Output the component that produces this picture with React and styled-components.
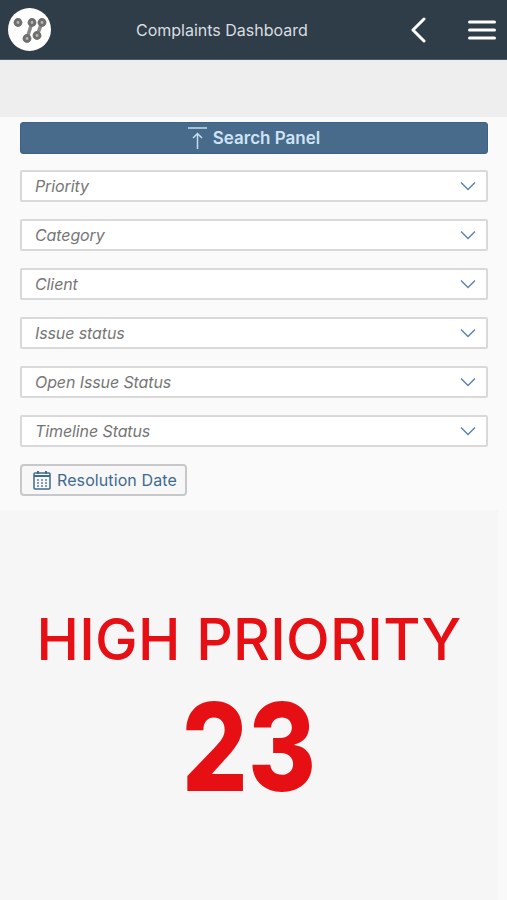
import React from "react";
import styled, { createGlobalStyle } from "styled-components";

const Global = createGlobalStyle`
  html, body { margin: 0; padding: 0; background: #f6f6f7; }
  * { box-sizing: border-box; }
`;
const Page = styled.div`
  width: 507px; height: 900px; overflow: hidden;
  display: flex; flex-direction: column;
  font-family: Inter, "Noto Sans", sans-serif;
  background: #f6f6f7;
`;
const Header = styled.header`
  height: 60px; flex: none;
  background: #2f3d49;
  border-bottom: 1px solid #4d5862;
  display: flex; align-items: center;
  padding: 0 11px 0 8px;
`;
const LogoWrap = styled.div`
  width: 43px; height: 43px; flex: none;
`;
const Title = styled.div`
  margin-left: 85px;
  color: #d9dde0; font-size: 16px; white-space: nowrap;
`;
const Actions = styled.div`
  margin-left: auto; display: flex; align-items: center; gap: 42px;
`;
const Band = styled.div`
  height: 57px; flex: none; background: #eeeeef;
`;
const Panel = styled.section`
  height: 393px; flex: none; background: #fafafa;
  padding: 5px 19px 0 20px;
  display: flex; flex-direction: column;
`;
const SearchButton = styled.button`
  height: 32px; width: 100%; flex: none; padding: 0;
  border: 1px solid #3f6284; border-radius: 3px;
  background: #486b8c;
  color: #cfe3f5; font: 600 17px Inter, sans-serif;
  display: flex; align-items: center; justify-content: center; gap: 5px;
  margin-bottom: 16px;
`;
const Select = styled.div`
  height: 32px; flex: none; background: #fff;
  border: 2px solid #d9d9d9; border-radius: 2px;
  padding: 0 10px 0 13px; margin-bottom: 17px;
  display: flex; align-items: center; justify-content: space-between;
  color: #767676; font-size: 16px; font-style: italic; letter-spacing: -0.1px;
`;
const DateButton = styled.button`
  align-self: flex-start; width: 167px; height: 32px; padding: 0 0 0 11px;
  border: 2px solid #c6c8ca; border-radius: 4px; background: #f7f7f7;
  color: #3f6a90; font: 400 16px Inter, sans-serif; letter-spacing: 0.1px;
  display: flex; align-items: center; gap: 6px;
`;
const Kpi = styled.section`
  flex: 1; display: flex; flex-direction: column; align-items: center;
  padding-top: 90px; color: #e60f14;
  border-right: 9px solid #f9f9f9;
`;
const KpiLabel = styled.div`
  font-size: 57px; line-height: 80px; white-space: nowrap; font-weight: 500;
  letter-spacing: 0.3px;
`;
const KpiValue = styled.div`
  font-size: 122px; line-height: 130px; font-weight: 800; margin-top: 2px;
  transform: scaleX(0.85);
`;

const Logo = () => (
  <svg width="43" height="43" viewBox="0 0 43 43">
    <circle cx="21.5" cy="21.5" r="21.5" fill="#fff" />
    <path d="M34 14.5 L29 27.5 M24 14.5 L19 30.5" stroke="#8a8a8a" strokeWidth="3.5" />
    {[[10, 14.5], [24, 14.5], [34, 14.5], [19, 30.5], [29, 27.5]].map(([x, y]) => (
      <g key={x}>
        <circle cx={x} cy={y} r="4.4" fill="#6f6f6f" />
        <circle cx={x} cy={y} r="1.4" fill="#b8b8b8" />
      </g>
    ))}
  </svg>
);
const Back = () => (
  <svg width="16" height="26" viewBox="0 0 16 26">
    <path d="M14 2 L3 13 L14 24" fill="none" stroke="#fff" strokeWidth="3" strokeLinecap="round" strokeLinejoin="round" />
  </svg>
);
const Menu = () => (
  <svg width="28" height="22" viewBox="0 0 28 22">
    <path d="M1.5 3 H26.5 M1.5 11 H26.5 M1.5 19 H26.5" stroke="#fff" strokeWidth="3" strokeLinecap="round" />
  </svg>
);
const Collapse = () => (
  <svg width="20" height="24" viewBox="0 0 20 24">
    <path d="M0 2 H19 M9.5 23 V8 M5 12 L9.5 7.5 L14 12" fill="none" stroke="#c4dcf0" strokeWidth="1.5" />
  </svg>
);
const Chevron = () => (
  <svg width="16" height="10" viewBox="0 0 16 10">
    <path d="M1 1.5 L8 8.5 L15 1.5" fill="none" stroke="#5c86ad" strokeWidth="1.5" />
  </svg>
);
const Calendar = () => (
  <svg width="18" height="20" viewBox="0 0 18 20">
    <rect x="1" y="3" width="16" height="16" rx="1" fill="none" stroke="#3f6a90" strokeWidth="1.5" />
    <path d="M1 6 H17 M5 1 V4 M13 1 V4" stroke="#3f6a90" strokeWidth="2" />
    {[5, 9, 13].flatMap((x) => [10, 13, 16].map((y) => (
      <rect key={`${x}-${y}`} x={x - 0.8} y={y - 0.8} width="1.6" height="1.6" fill="#3f6a90" />
    )))}
  </svg>
);

const filters = ["Priority", "Category", "Client", "Issue status", "Open Issue Status", "Timeline Status"];

export default function App() {
  return (
    <Page>
      <Global />
      <Header>
        <LogoWrap><Logo /></LogoWrap>
        <Title>Complaints Dashboard</Title>
        <Actions><Back /><Menu /></Actions>
      </Header>
      <Band />
      <Panel>
        <SearchButton><Collapse />Search Panel</SearchButton>
        {filters.map((f) => (
          <Select key={f}>{f}<Chevron /></Select>
        ))}
        <DateButton><Calendar />Resolution Date</DateButton>
      </Panel>
      <Kpi>
        <KpiLabel>HIGH PRIORITY</KpiLabel>
        <KpiValue>23</KpiValue>
      </Kpi>
    </Page>
  );
}
